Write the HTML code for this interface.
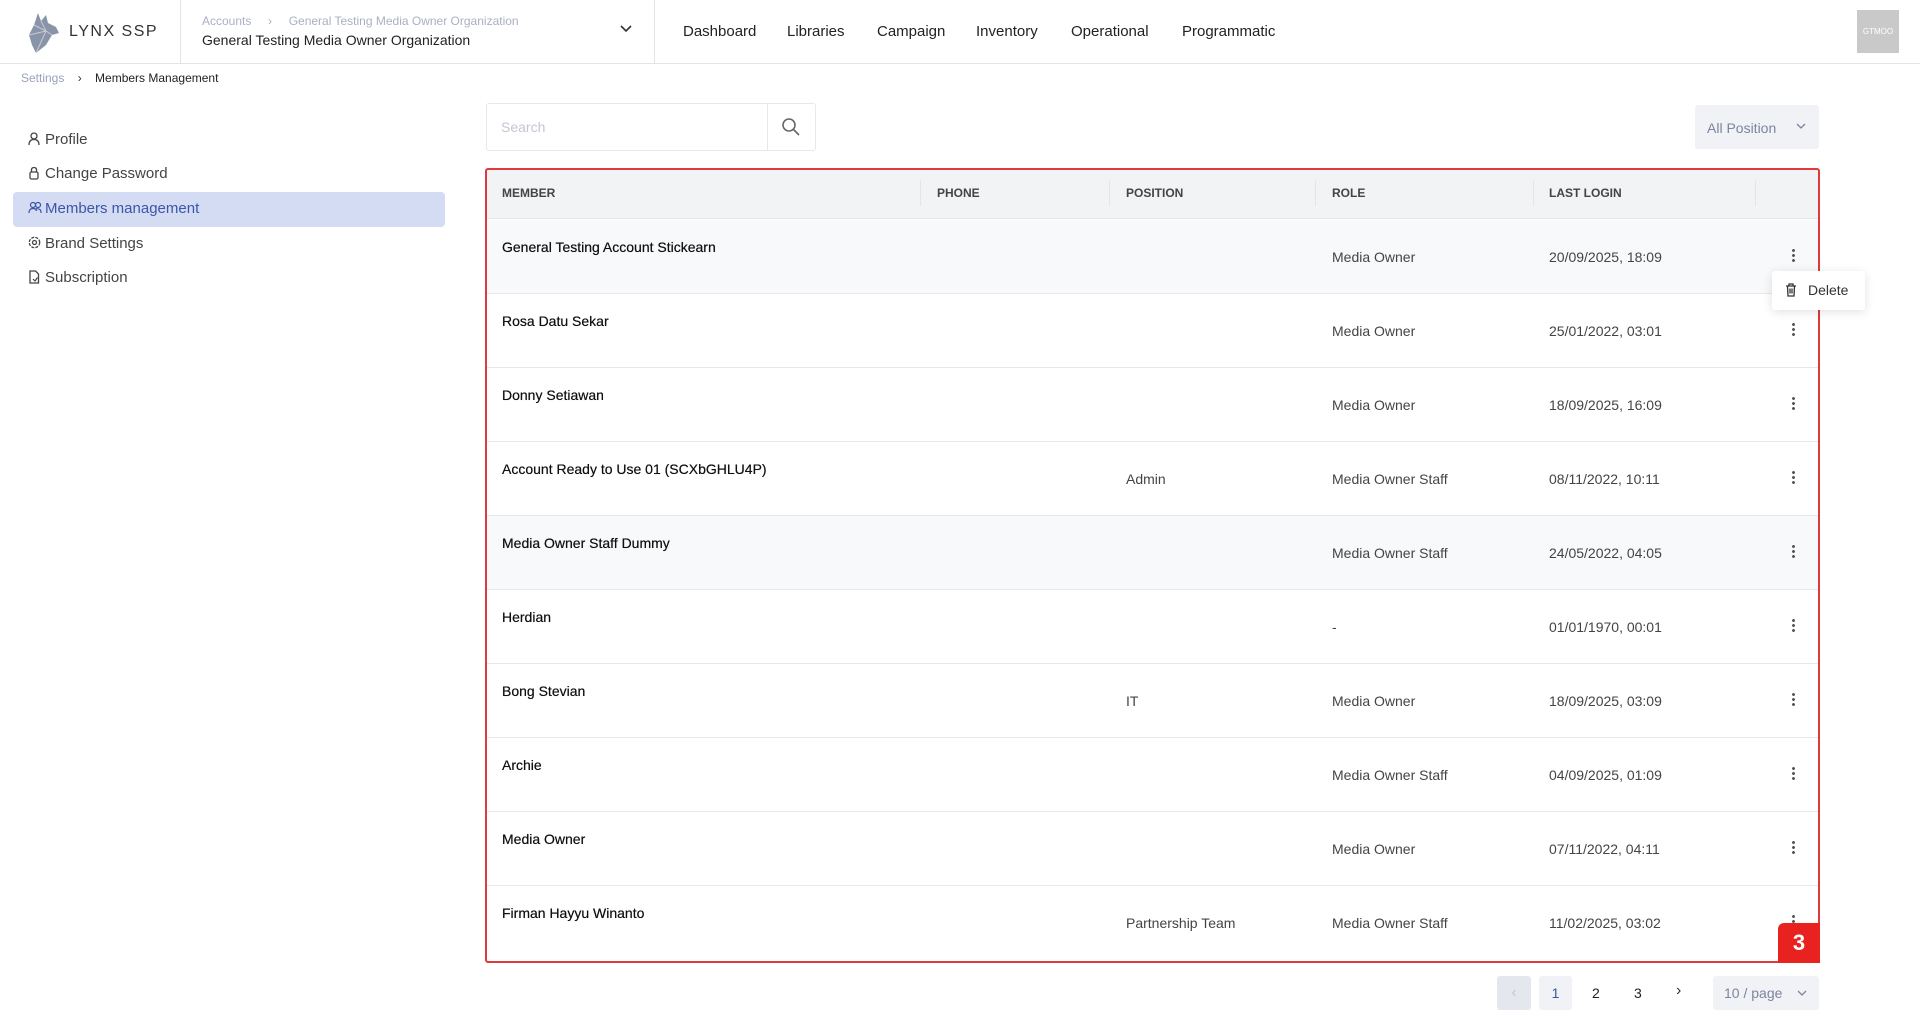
<!DOCTYPE html>
<html><head><meta charset="utf-8"><style>
*{margin:0;padding:0;box-sizing:border-box}
body{width:1920px;height:1017px;position:relative;background:#fff;font-family:"Liberation Sans",sans-serif;color:#222;overflow:hidden}
.a{position:absolute;white-space:nowrap}
.nav{top:23px;font-size:15px;color:#222}
.side{left:45px;font-size:15px;color:#444}
.ic{position:absolute;left:28px}
.hd{top:186px;font-size:12px;font-weight:bold;color:#444}
.sep{position:absolute;top:180px;width:1px;height:26px;background:#e3e5ea}
.row{position:absolute;left:486px;width:1333px;height:74px;border-bottom:1px solid #e6e8ec}
.row .n{position:absolute;left:16px;top:19px;font-size:14px;color:#111;text-shadow:0 0 .4px #111}
.row .c{position:absolute;top:29px;font-size:14px;color:#444}
.dots{position:absolute;left:1306px;top:28px;width:3px;height:14px;background:radial-gradient(circle,#555 1.3px,transparent 1.6px) 0 0/3px 5px repeat-y}
</style></head><body>
<div class="a" style="left:0;top:63px;width:1920px;height:1px;background:#e2e4e8"></div>
<svg class="a" style="left:26px;top:11px" width="36" height="44" viewBox="0 0 36 44"><path d="M12 2 L15 10 L20 4 L22 12 L30 16 L33 22 L26 24 L20 34 L10 42 L6 34 L3 24 L8 14 Z" fill="#8a94a8"/><path d="M8 14 L20 20 L10 42 M20 20 L26 24 M15 10 L20 20 L3 24" stroke="#c5cbd6" stroke-width="1" fill="none"/></svg>
<div class="a" style="left:69px;top:23px;font-size:16px;letter-spacing:1.5px;color:#333">LYNX SSP</div>
<div class="a" style="left:180px;top:0;width:1px;height:63px;background:#e2e4e8"></div>
<div class="a" style="left:202px;top:14px;font-size:12px;color:#a9b0c4">Accounts&nbsp;&nbsp;&nbsp;&nbsp;&nbsp;›&nbsp;&nbsp;&nbsp;&nbsp;&nbsp;General Testing Media Owner Organization</div>
<div class="a" style="left:202px;top:32px;font-size:14px;color:#222">General Testing Media Owner Organization</div>
<svg class="a" style="left:620px;top:25px" width="12" height="8"><path d="M1 1 L6 6 L11 1" stroke="#333" stroke-width="1.6" fill="none"/></svg>
<div class="a" style="left:654px;top:0;width:1px;height:63px;background:#e2e4e8"></div>
<div class="a nav" style="left:683px">Dashboard</div>
<div class="a nav" style="left:787px">Libraries</div>
<div class="a nav" style="left:877px">Campaign</div>
<div class="a nav" style="left:976px">Inventory</div>
<div class="a nav" style="left:1071px">Operational</div>
<div class="a nav" style="left:1182px">Programmatic</div>
<div class="a" style="left:1857px;top:10px;width:42px;height:43px;background:#c9c9c9;color:#fff;font-size:8px;text-align:center;line-height:43px">GTMOO</div>
<div class="a" style="left:21px;top:71px;font-size:12px;color:#9aa3ba">Settings&nbsp;&nbsp;&nbsp;&nbsp;<span style="color:#333">›</span>&nbsp;&nbsp;&nbsp;&nbsp;<span style="color:#222">Members Management</span></div>
<!-- sidebar -->
<div class="a" style="left:13px;top:192px;width:432px;height:35px;background:#d3dcf2;border-radius:4px"></div>
<svg class="ic" style="top:132px" width="12" height="14"><circle cx="6" cy="4" r="3" stroke="#444" stroke-width="1.3" fill="none"/><path d="M1 13 Q1 7.5 6 7.5 Q11 7.5 11 13" stroke="#444" stroke-width="1.3" fill="none"/></svg>
<div class="a side" style="top:131px">Profile</div>
<svg class="ic" style="top:166px" width="12" height="14"><path d="M3.5 6 V4 Q3.5 1.5 6 1.5 Q8.5 1.5 8.5 4 V6" stroke="#444" stroke-width="1.3" fill="none"/><rect x="2" y="6" width="8" height="7" rx="1.5" stroke="#444" stroke-width="1.3" fill="none"/></svg>
<div class="a side" style="top:165px">Change Password</div>
<svg class="ic" style="top:201px" width="14" height="14"><circle cx="5" cy="4" r="2.5" stroke="#3d55a8" stroke-width="1.2" fill="none"/><circle cx="10" cy="4" r="2.5" stroke="#3d55a8" stroke-width="1.2" fill="none"/><path d="M1 12 Q1 7.5 5 7.5 Q8 7.5 8.5 10 M7 8 Q10 7 12.5 9 Q13 10.5 13 12" stroke="#3d55a8" stroke-width="1.2" fill="none"/></svg>
<div class="a side" style="top:200px;color:#3d55a8">Members management</div>
<svg class="ic" style="top:236px" width="13" height="13"><circle cx="6.5" cy="6.5" r="5.2" stroke="#444" stroke-width="1.3" fill="none" stroke-dasharray="3 1.2"/><circle cx="6.5" cy="6.5" r="2" stroke="#444" stroke-width="1.3" fill="none"/></svg>
<div class="a side" style="top:235px">Brand Settings</div>
<svg class="ic" style="top:270px" width="12" height="14"><path d="M2 1 H7.5 L10.5 4 V13 H2 Z" stroke="#444" stroke-width="1.3" fill="none"/><path d="M5 9 L7 11 L9.5 7.5" stroke="#444" stroke-width="1.2" fill="none"/></svg>
<div class="a side" style="top:269px">Subscription</div>
<!-- search -->
<div class="a" style="left:486px;top:103px;width:330px;height:48px;border:1px solid #e6e8ec;border-radius:3px"></div>
<div class="a" style="left:767px;top:103px;width:1px;height:48px;background:#e6e8ec"></div>
<div class="a" style="left:501px;top:119px;font-size:14px;color:#c2c7d2">Search</div>
<svg class="a" style="left:781px;top:117px" width="20" height="20"><circle cx="8" cy="8" r="6" stroke="#666" stroke-width="1.6" fill="none"/><path d="M12.5 12.5 L18 18" stroke="#666" stroke-width="1.6"/></svg>
<div class="a" style="left:1695px;top:105px;width:124px;height:44px;background:#f1f2f5;border-radius:3px"></div>
<div class="a" style="left:1707px;top:120px;font-size:14px;color:#7c84a0">All Position</div>
<svg class="a" style="left:1796px;top:123px" width="10" height="7"><path d="M1 1 L5 5 L9 1" stroke="#7c84a0" stroke-width="1.3" fill="none"/></svg>
<!-- table -->
<div class="a" style="left:486px;top:169px;width:1333px;height:50px;background:#f2f3f5;border-bottom:1px solid #e3e5ea"></div>
<div class="a hd" style="left:502px">MEMBER</div>
<div class="a hd" style="left:937px">PHONE</div>
<div class="a hd" style="left:1126px">POSITION</div>
<div class="a hd" style="left:1332px">ROLE</div>
<div class="a hd" style="left:1549px">LAST LOGIN</div>
<div class="sep" style="left:920px"></div><div class="sep" style="left:1109px"></div><div class="sep" style="left:1315px"></div><div class="sep" style="left:1533px"></div><div class="sep" style="left:1755px"></div>

<div class="row" style="top:220px;background:#f8f9fa"><div class="n">General Testing Account Stickearn</div><div class="c" style="left:846px">Media Owner</div><div class="c" style="left:1063px">20/09/2025, 18:09</div><div class="dots"></div></div>
<div class="row" style="top:294px"><div class="n">Rosa Datu Sekar</div><div class="c" style="left:846px">Media Owner</div><div class="c" style="left:1063px">25/01/2022, 03:01</div><div class="dots"></div></div>
<div class="row" style="top:368px"><div class="n">Donny Setiawan</div><div class="c" style="left:846px">Media Owner</div><div class="c" style="left:1063px">18/09/2025, 16:09</div><div class="dots"></div></div>
<div class="row" style="top:442px"><div class="n">Account Ready to Use 01 (SCXbGHLU4P)</div><div class="c" style="left:640px">Admin</div><div class="c" style="left:846px">Media Owner Staff</div><div class="c" style="left:1063px">08/11/2022, 10:11</div><div class="dots"></div></div>
<div class="row" style="top:516px;background:#f8f9fa"><div class="n">Media Owner Staff Dummy</div><div class="c" style="left:846px">Media Owner Staff</div><div class="c" style="left:1063px">24/05/2022, 04:05</div><div class="dots"></div></div>
<div class="row" style="top:590px"><div class="n">Herdian</div><div class="c" style="left:846px">-</div><div class="c" style="left:1063px">01/01/1970, 00:01</div><div class="dots"></div></div>
<div class="row" style="top:664px"><div class="n">Bong Stevian</div><div class="c" style="left:640px">IT</div><div class="c" style="left:846px">Media Owner</div><div class="c" style="left:1063px">18/09/2025, 03:09</div><div class="dots"></div></div>
<div class="row" style="top:738px"><div class="n">Archie</div><div class="c" style="left:846px">Media Owner Staff</div><div class="c" style="left:1063px">04/09/2025, 01:09</div><div class="dots"></div></div>
<div class="row" style="top:812px"><div class="n">Media Owner</div><div class="c" style="left:846px">Media Owner</div><div class="c" style="left:1063px">07/11/2022, 04:11</div><div class="dots"></div></div>
<div class="row" style="top:886px;border-bottom:none"><div class="n">Firman Hayyu Winanto</div><div class="c" style="left:640px">Partnership Team</div><div class="c" style="left:846px">Media Owner Staff</div><div class="c" style="left:1063px">11/02/2025, 03:02</div><div class="dots"></div></div>

<div class="a" style="left:485px;top:168px;width:1335px;height:795px;border:2px solid #e0393e;border-radius:3px"></div>
<div class="a" style="left:1778px;top:923px;width:42px;height:40px;background:#e8231f;border-radius:6px 0 0 0;color:#fff;font-size:22px;font-weight:bold;text-align:center;line-height:40px">3</div>
<div class="a" style="left:1772px;top:271px;width:93px;height:39px;background:#fff;border-radius:3px;box-shadow:0 2px 10px rgba(0,0,0,.12)"></div>
<svg class="a" style="left:1785px;top:283px" width="12" height="14"><path d="M1 3 H11 M4 3 V1 H8 V3 M2.5 3 L3 13 H9 L9.5 3 M5 5.5 V10.5 M7 5.5 V10.5" stroke="#333" stroke-width="1.3" fill="none"/></svg>
<div class="a" style="left:1808px;top:282px;font-size:14px;color:#333">Delete</div>
<div class="a" style="left:1497px;top:976px;width:34px;height:34px;background:#e5e7ee;border-radius:3px;color:#c0c5d2;text-align:center;line-height:34px;font-size:15px">‹</div>
<div class="a" style="left:1539px;top:976px;width:33px;height:34px;background:#f1f2f5;border-radius:3px;color:#3d55a8;text-align:center;line-height:34px;font-size:14px">1</div>
<div class="a" style="left:1592px;top:985px;font-size:14px;color:#222">2</div>
<div class="a" style="left:1634px;top:985px;font-size:14px;color:#222">3</div>
<div class="a" style="left:1676px;top:982px;font-size:16px;color:#333">›</div>
<div class="a" style="left:1713px;top:976px;width:106px;height:34px;background:#f1f2f5;border-radius:3px"></div>
<div class="a" style="left:1724px;top:985px;font-size:14px;color:#7c84a0">10 / page</div>
<svg class="a" style="left:1797px;top:990px" width="10" height="7"><path d="M1 1 L5 5 L9 1" stroke="#7c84a0" stroke-width="1.3" fill="none"/></svg>
</body></html>
